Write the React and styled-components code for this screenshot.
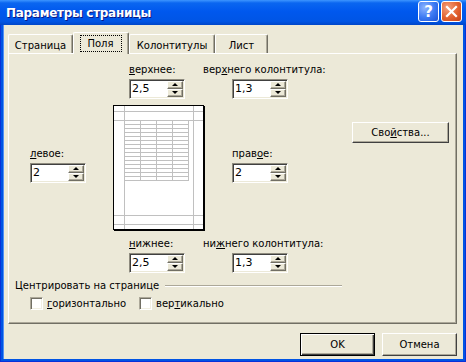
import React from "react";
import styled, { createGlobalStyle } from "styled-components";

const GlobalStyle = createGlobalStyle`
  html, body { margin: 0; padding: 0; background: #ffffff; }
  body {
    font-family: "DejaVu Sans", Tahoma, sans-serif;
    font-size: 10px;
    color: #000;
  }
`;

const Window = styled.div`
  width: 466px;
  height: 362px;
  display: flex;
  flex-direction: column;
  background: #0054e3;
  overflow: hidden;
`;

const TitleBar = styled.div`
  height: 25px;
  flex: none;
  display: flex;
  align-items: center;
  padding: 0 4px 0 6px;
  background: linear-gradient(
    to bottom,
    #3d95ff 0%,
    #0a66f0 12%,
    #0058ee 45%,
    #0055e5 85%,
    #0046c8 100%
  );
`;

const Title = styled.div`
  flex: 1;
  color: #fff;
  font-family: "DejaVu Sans", sans-serif;
  font-weight: bold;
  font-size: 12px;
  letter-spacing: -0.3px;
  text-shadow: 1px 1px 0 #0a1883;
`;

const CapButtons = styled.div`
  display: flex;
  gap: 2px;
  margin-top: -2px;
`;

const CapButton = styled.div`
  width: 21px;
  height: 21px;
  box-sizing: border-box;
  border: 1px solid #fff;
  border-radius: 3px;
  display: flex;
  align-items: center;
  justify-content: center;
  color: #fff;
  font-weight: bold;
  font-size: 15px;
  font-family: "DejaVu Sans", sans-serif;
  background: ${(p) =>
    p.$close
      ? "radial-gradient(circle at 30% 30%, #f3a07e 0%, #e2612f 55%, #c4421a 100%)"
      : "radial-gradient(circle at 30% 30%, #8cb4ff 0%, #3a78f2 55%, #1d54d6 100%)"};
`;

const Frame = styled.div`
  flex: 1;
  display: flex;
  padding: 0 3px 3px 3px;
  box-shadow: inset 1px 0 0 #0831d9, inset -1px 0 0 #0831d9,
    inset 0 -1px 0 #0831d9;
`;

const Client = styled.div`
  flex: 1;
  background: #ece9d8;
  padding: 7px 6px 0 5px;
  display: flex;
  flex-direction: column;
  box-shadow: inset 1px 0 0 #4f8ff5;
`;

const TabRow = styled.div`
  display: flex;
  align-items: flex-end;
  height: 21px;
  position: relative;
  z-index: 1;
`;

const Tab = styled.div`
  width: ${(p) => p.$w}px;
  height: ${(p) => (p.$active ? 22 : 19)}px;
  margin-bottom: ${(p) => (p.$active ? -1 : 0)}px;
  box-sizing: border-box;
  background: #ece9d8;
  border-top: 1px solid #fff;
  border-left: 1px solid #fff;
  border-right: 1px solid #716f64;
  border-top-left-radius: 2px;
  border-top-right-radius: 2px;
  box-shadow: inset -1px 0 0 #aca899;
  display: flex;
  align-items: center;
  justify-content: center;
  padding-top: ${(p) => (p.$active ? 0 : 2)}px;
  white-space: nowrap;
`;

const Focus = styled.span`
  outline: 1px dotted #000;
  outline-offset: 0;
  padding: 2px 7px 2px 6px;
`;

const Panel = styled.div`
  height: 271px;
  box-sizing: border-box;
  background: #ece9d8;
  border-top: 1px solid #fff;
  border-left: 1px solid #fff;
  border-right: 1px solid #716f64;
  border-bottom: 1px solid #716f64;
  box-shadow: inset -1px -1px 0 #aca899;
  padding-top: 9px;
`;

const MarginGrid = styled.div`
  display: grid;
  grid-template-columns: 104px 90px 149px 1fr;
  grid-template-rows: 36px 126px 37px;
  row-gap: 6px;
`;

const Field = styled.div`
  grid-column: ${(p) => p.$col};
  grid-row: ${(p) => p.$row};
  align-self: start;
  display: flex;
  flex-direction: column;
  gap: 3px;
  margin-left: ${(p) => p.$ml || 0}px;
  margin-top: ${(p) => p.$mt || 0}px;
`;

const Label = styled.div`
  line-height: 13px;
  white-space: nowrap;
`;

const U = styled.span`
  text-decoration: underline;
`;

const SpinBox = styled.div`
  width: 56px;
  height: 20px;
  box-sizing: border-box;
  margin-left: ${(p) => p.$indent || 0}px;
  display: flex;
  background: #fff;
  border: 1px solid;
  border-color: #8e8b7e #ffffff #ffffff #8e8b7e;
  box-shadow: inset 1px 1px 0 #404040, inset -1px -1px 0 #ece9d8;
  padding: 1px;
`;

const SpinValue = styled.div`
  flex: 1;
  padding-left: 1px;
  line-height: 16px;
  font-size: 11px;
`;

const SpinButtons = styled.div`
  width: 16px;
  display: flex;
  flex-direction: column;
`;

const SpinBtn = styled.div`
  flex: 1;
  box-sizing: border-box;
  background: #ece9d8;
  border-top: 1px solid #fff;
  border-left: 1px solid #fff;
  border-right: 1px solid #716f64;
  border-bottom: 1px solid #716f64;
  box-shadow: inset -1px -1px 0 #aca899;
  display: flex;
  align-items: center;
  justify-content: center;
  &::after {
    content: "";
    width: 0;
    height: 0;
    border-left: 3px solid transparent;
    border-right: 3px solid transparent;
    ${(p) =>
      p.$down
        ? "border-top: 3px solid #000; margin-top: -1px;"
        : "border-bottom: 3px solid #000; margin-top: -1px;"}
  }
`;

const Preview = styled.div`
  grid-column: 2;
  grid-row: 2;
  width: 91px;
  height: 125px;
  box-sizing: border-box;
  border: 1px solid #000;
  box-shadow: 1px 1px 0 #000;
  background: #fff;
  align-self: start;
  justify-self: start;
  svg {
    display: block;
  }
`;

const PropsButton = styled.div`
  grid-column: 4;
  grid-row: 2;
  align-self: start;
  justify-self: start;
  margin-top: 17px;
`;

const Button = styled.div`
  width: ${(p) => p.$w || 75}px;
  height: ${(p) => p.$h || 23}px;
  box-sizing: border-box;
  background: #ece9d8;
  display: flex;
  align-items: center;
  justify-content: center;
  white-space: nowrap;
  border: 1px solid;
  border-color: ${(p) =>
    p.$default ? "#000" : "#ffffff #404040 #404040 #ffffff"};
  box-shadow: ${(p) =>
    p.$default
      ? "inset 1px 1px 0 #fff, inset -1px -1px 0 #404040, inset -2px -2px 0 #aca899"
      : "inset -1px -1px 0 #aca899"};
`;

const Group = styled.div`
  margin: 5px 0 0 6px;
`;

const GroupHead = styled.div`
  display: flex;
  align-items: center;
  gap: 6px;
  width: 327px;
  line-height: 13px;
`;

const Rule = styled.div`
  flex: 1;
  border-top: 1px solid #aca899;
  border-bottom: 1px solid #fff;
  margin-top: 1px;
`;

const Checks = styled.div`
  display: flex;
  margin: 5px 0 0 15px;
`;

const CheckItem = styled.div`
  width: ${(p) => (p.$w ? `${p.$w}px` : "auto")};
  display: flex;
  align-items: center;
  gap: 4px;
  line-height: 13px;
`;

const CheckBox = styled.div`
  width: 13px;
  height: 13px;
  box-sizing: border-box;
  background: #fff;
  border: 1px solid;
  border-color: #aca899 #ffffff #ffffff #aca899;
  box-shadow: inset 1px 1px 0 #716f64, inset -1px -1px 0 #f1efe2;
`;

const Footer = styled.div`
  display: flex;
  justify-content: flex-end;
  gap: 7px;
  margin-top: 9px;
`;

const Spin = ({ value, indent }) => (
  <SpinBox $indent={indent}>
    <SpinValue>{value}</SpinValue>
    <SpinButtons>
      <SpinBtn />
      <SpinBtn $down />
    </SpinButtons>
  </SpinBox>
);

const rows = Array.from({ length: 16 }, (_, i) => 14 + i * 4);

const PagePreview = () => (
  <Preview>
    <svg width="89" height="123" shapeRendering="crispEdges">
      <g stroke="#c0c0c0" strokeWidth="1">
        <line x1="10.5" y1="0" x2="10.5" y2="123" />
        <line x1="79.5" y1="0" x2="79.5" y2="123" />
        <line x1="0" y1="5.5" x2="89" y2="5.5" />
        <line x1="0" y1="14.5" x2="89" y2="14.5" />
        <line x1="0" y1="109.5" x2="89" y2="109.5" />
        <line x1="0" y1="118.5" x2="89" y2="118.5" />
        {rows.map((y) => (
          <line key={y} x1="10" y1={y + 0.5} x2="75" y2={y + 0.5} />
        ))}
        {[26, 42, 58, 74].map((x) => (
          <line key={x} x1={x + 0.5} y1="14" x2={x + 0.5} y2="75" />
        ))}
      </g>
    </svg>
  </Preview>
);

export default function App() {
  return (
    <>
      <GlobalStyle />
      <Window>
        <TitleBar>
          <Title>Параметры страницы</Title>
          <CapButtons>
            <CapButton>?</CapButton>
            <CapButton $close>
              <svg width="13" height="13" viewBox="0 0 13 13">
                <path
                  d="M2 2 L11 11 M11 2 L2 11"
                  stroke="#fff"
                  strokeWidth="2.2"
                  strokeLinecap="square"
                />
              </svg>
            </CapButton>
          </CapButtons>
        </TitleBar>
        <Frame>
          <Client>
            <TabRow>
              <Tab $w={65}>Страница</Tab>
              <Tab $w={56} $active>
                <Focus>Поля</Focus>
              </Tab>
              <Tab $w={86}>Колонтитулы</Tab>
              <Tab $w={53}>Лист</Tab>
            </TabRow>
            <Panel>
              <MarginGrid>
                <Field $col={2} $row={1} $ml={16}>
                  <Label>
                    <U>в</U>ерхнее:
                  </Label>
                  <Spin value="2,5" />
                </Field>
                <Field $col={3} $row={1}>
                  <Label>
                    вер<U>х</U>него колонтитула:
                  </Label>
                  <Spin value="1,3" indent={29} />
                </Field>

                <Field $col={1} $row={2} $ml={21} $mt={42}>
                  <Label>
                    <U>л</U>евое:
                  </Label>
                  <Spin value="2" />
                </Field>
                <PagePreview />
                <Field $col={3} $row={2} $ml={29} $mt={42}>
                  <Label>
                    прав<U>о</U>е:
                  </Label>
                  <Spin value="2" />
                </Field>
                <PropsButton>
                  <Button $w={97} $h={21}>
                    <span>
                      Сво<U>й</U>ства...
                    </span>
                  </Button>
                </PropsButton>

                <Field $col={2} $row={3} $ml={16}>
                  <Label>
                    <U>н</U>ижнее:
                  </Label>
                  <Spin value="2,5" />
                </Field>
                <Field $col={3} $row={3}>
                  <Label>
                    ни<U>ж</U>него колонтитула:
                  </Label>
                  <Spin value="1,3" indent={29} />
                </Field>
              </MarginGrid>

              <Group>
                <GroupHead>
                  <span>Центрировать на странице</span>
                  <Rule />
                </GroupHead>
                <Checks>
                  <CheckItem $w={109}>
                    <CheckBox />
                    <span>
                      <U>г</U>оризонтально
                    </span>
                  </CheckItem>
                  <CheckItem>
                    <CheckBox />
                    <span>
                      вер<U>т</U>икально
                    </span>
                  </CheckItem>
                </Checks>
              </Group>
            </Panel>
            <Footer>
              <Button $default>OK</Button>
              <Button>Отмена</Button>
            </Footer>
          </Client>
        </Frame>
      </Window>
    </>
  );
}
